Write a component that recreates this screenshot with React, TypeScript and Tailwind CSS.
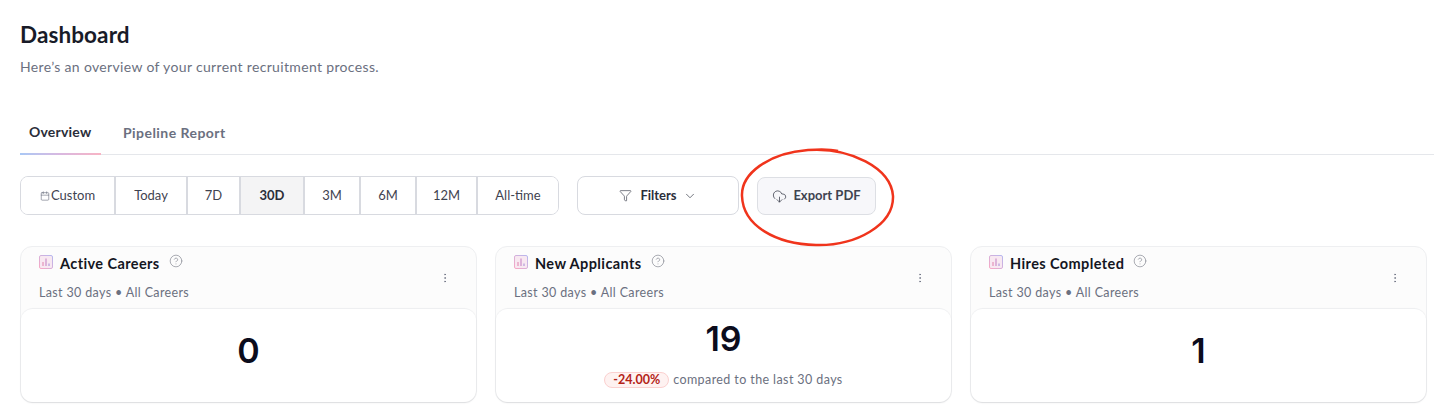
import React from "react";
import { Calendar, ChevronDown, CloudDownload, Funnel, CircleHelp, EllipsisVertical } from "lucide-react";

const ranges = [
  { label: "Custom", w: "w-[93px]", icon: true },
  { label: "Today", w: "w-[72px]" },
  { label: "7D", w: "w-[53px]" },
  { label: "30D", w: "w-[64px]", active: true },
  { label: "3M", w: "w-[56px]" },
  { label: "6M", w: "w-[56px]" },
  { label: "12M", w: "w-[61px]" },
  { label: "All-time", w: "flex-1" },
];

function ChartIcon() {
  return (
    <svg width="14" height="14" viewBox="0 0 14 14" className="shrink-0">
      <defs>
        <linearGradient id="cg" x1="0" y1="1" x2="1" y2="0">
          <stop offset="0" stopColor="#f9a8c4" />
          <stop offset="1" stopColor="#b4b8f0" />
        </linearGradient>
      </defs>
      <rect x="0.5" y="0.5" width="13" height="13" rx="1.5" fill="#f8e8f1" stroke="url(#cg)" />
      <rect x="3.2" y="7" width="1.6" height="4" fill="#e9a9c6" />
      <rect x="6.2" y="3.5" width="1.6" height="7.5" fill="#d6a6d4" />
      <rect x="9.2" y="8.5" width="1.6" height="2.5" fill="#c3aee0" />
    </svg>
  );
}

function Card({ title, value, delta }: { title: string; value: string; delta?: boolean }) {
  return (
    <div className="flex h-[157px] flex-1 flex-col rounded-xl border border-[#eeeff1] bg-[#fcfcfc]">
      <div className="relative h-[61px] shrink-0 pl-[18px] pt-[7px]">
        <div className="flex items-start">
          <div className="mt-[1px]"><ChartIcon /></div>
          <span className="ml-[7px] text-[14.5px] leading-[20px] font-bold tracking-[0.4px] text-[#14161f]">{title}</span>
          <CircleHelp size={14} strokeWidth={1.25} className="ml-[9px] text-[#8b8e98]" />
        </div>
        <div className="mt-[11px] text-[12.5px] leading-[16px] tracking-[0.35px] text-[#6b7080]">Last 30 days • All Careers</div>
        <EllipsisVertical size={12} strokeWidth={1.5} className="absolute right-[25px] top-[25px] text-[#6b7080]" />
      </div>
      <div className="flex flex-1 flex-col items-center rounded-xl border-t border-[#eeeff1] bg-white shadow-[0_1px_2px_rgba(0,0,0,0.08)]">
        {delta ? (
          <>
            <div className="mt-[9px] font-['Inter',sans-serif] text-[34px] leading-[42px] font-semibold text-[#0b0c1c]">{value}</div>
            <div className="mt-[12px] flex items-center gap-[4px] text-[12.5px] leading-[16px] tracking-[0.4px] text-[#6b7080]">
              <span className="rounded-full border border-[#fbd0cf] bg-[#fef2f1] px-[8px] text-[12.5px] font-bold leading-[14px] tracking-[0px] text-[#b42318]">-24.00%</span>
              compared to the last 30 days
            </div>
          </>
        ) : (
          <div className="mt-[21px] font-['Inter',sans-serif] text-[34px] leading-[42px] font-semibold text-[#0b0c1c]">{value}</div>
        )}
      </div>
    </div>
  );
}

export default function App() {
  return (
    <div className="relative h-[410px] w-[1448px] overflow-hidden bg-white pl-[20px] pr-[14px] font-['Lato',sans-serif]">
      <h1 className="pt-[21px] text-[22.5px] leading-[28px] font-bold tracking-[0.1px] text-[#181b28]">Dashboard</h1>
      <p className="mt-[8px] text-[14px] leading-[20px] tracking-[0.34px] text-[#6b7080]">Here’s an overview of your current recruitment process.</p>

      <div className="mt-[42px] flex h-[36px] border-b border-[#e5e7eb]">
        <div className="relative w-[81px] pl-[9px] pt-[3px] text-[14px] leading-[20px] font-bold tracking-[0.2px] text-[#2b2e3a]">
          Overview
          <div className="absolute bottom-[-1px] left-0 h-[2px] w-full bg-gradient-to-r from-[#a9c8f5] via-[#d9b8e0] to-[#f8b4c4]" />
        </div>
        <div className="pl-[22px] pt-[4px] text-[14px] leading-[20px] font-bold tracking-[0.45px] text-[#6b7080]">Pipeline Report</div>
      </div>

      <div className="mt-[21px] flex h-[40px] items-start">
        <div className="flex h-[39px] w-[539px] overflow-hidden rounded-lg border border-[#d8dae0]">
          {ranges.map((r, i) => (
            <div
              key={r.label}
              className={`flex items-center justify-center text-[13px] ${r.w} ${i ? "border-l-2 border-[#d8dae0]" : ""} ${r.active ? "bg-[#f4f4f5] font-bold text-[#2b2e3a]" : "bg-white text-[#3f4350]"}`}
            >
              {r.icon && <Calendar size={10} strokeWidth={1.5} className="mr-px text-[#6b7080]" />}
              {r.label}
            </div>
          ))}
        </div>
        <div className="ml-[18px] flex h-[39px] w-[162px] items-center justify-center rounded-lg border border-[#d8dae0] bg-white text-[13px] font-bold text-[#2b2e3a]">
          <Funnel size={13} strokeWidth={1.25} className="mr-[8px] text-[#3f4350]" />
          Filters
          <ChevronDown size={14} strokeWidth={1.25} className="ml-[6px] text-[#3f4350]" />
        </div>
        <div className="ml-[18px] mt-px flex h-[38px] w-[119px] items-center justify-center rounded-lg border border-[#dddfe4] bg-[#f7f7fa] text-[13px] font-bold text-[#3f4350]">
          <CloudDownload size={15} strokeWidth={1.25} className="mr-[6px] text-[#3f4350]" />
          Export PDF
        </div>
      </div>

      <div className="mt-[30px] flex gap-[18px] pr-[7px]">
        <Card title="Active Careers" value="0" />
        <Card title="New Applicants" value="19" delta />
        <Card title="Hires Completed" value="1" />
      </div>

      <svg className="pointer-events-none absolute left-[738px] top-[146px]" width="158" height="103" viewBox="0 0 158 103" fill="none">
        <path d="M70 4 C112 1 153 22 155 50 C156 79 118 100 78 99 C38 98 5 80 4 50 C3 28 30 7 70 4 C84 3 92 3 100 5" stroke="#f0341c" strokeWidth="2.5" />
      </svg>
    </div>
  );
}
